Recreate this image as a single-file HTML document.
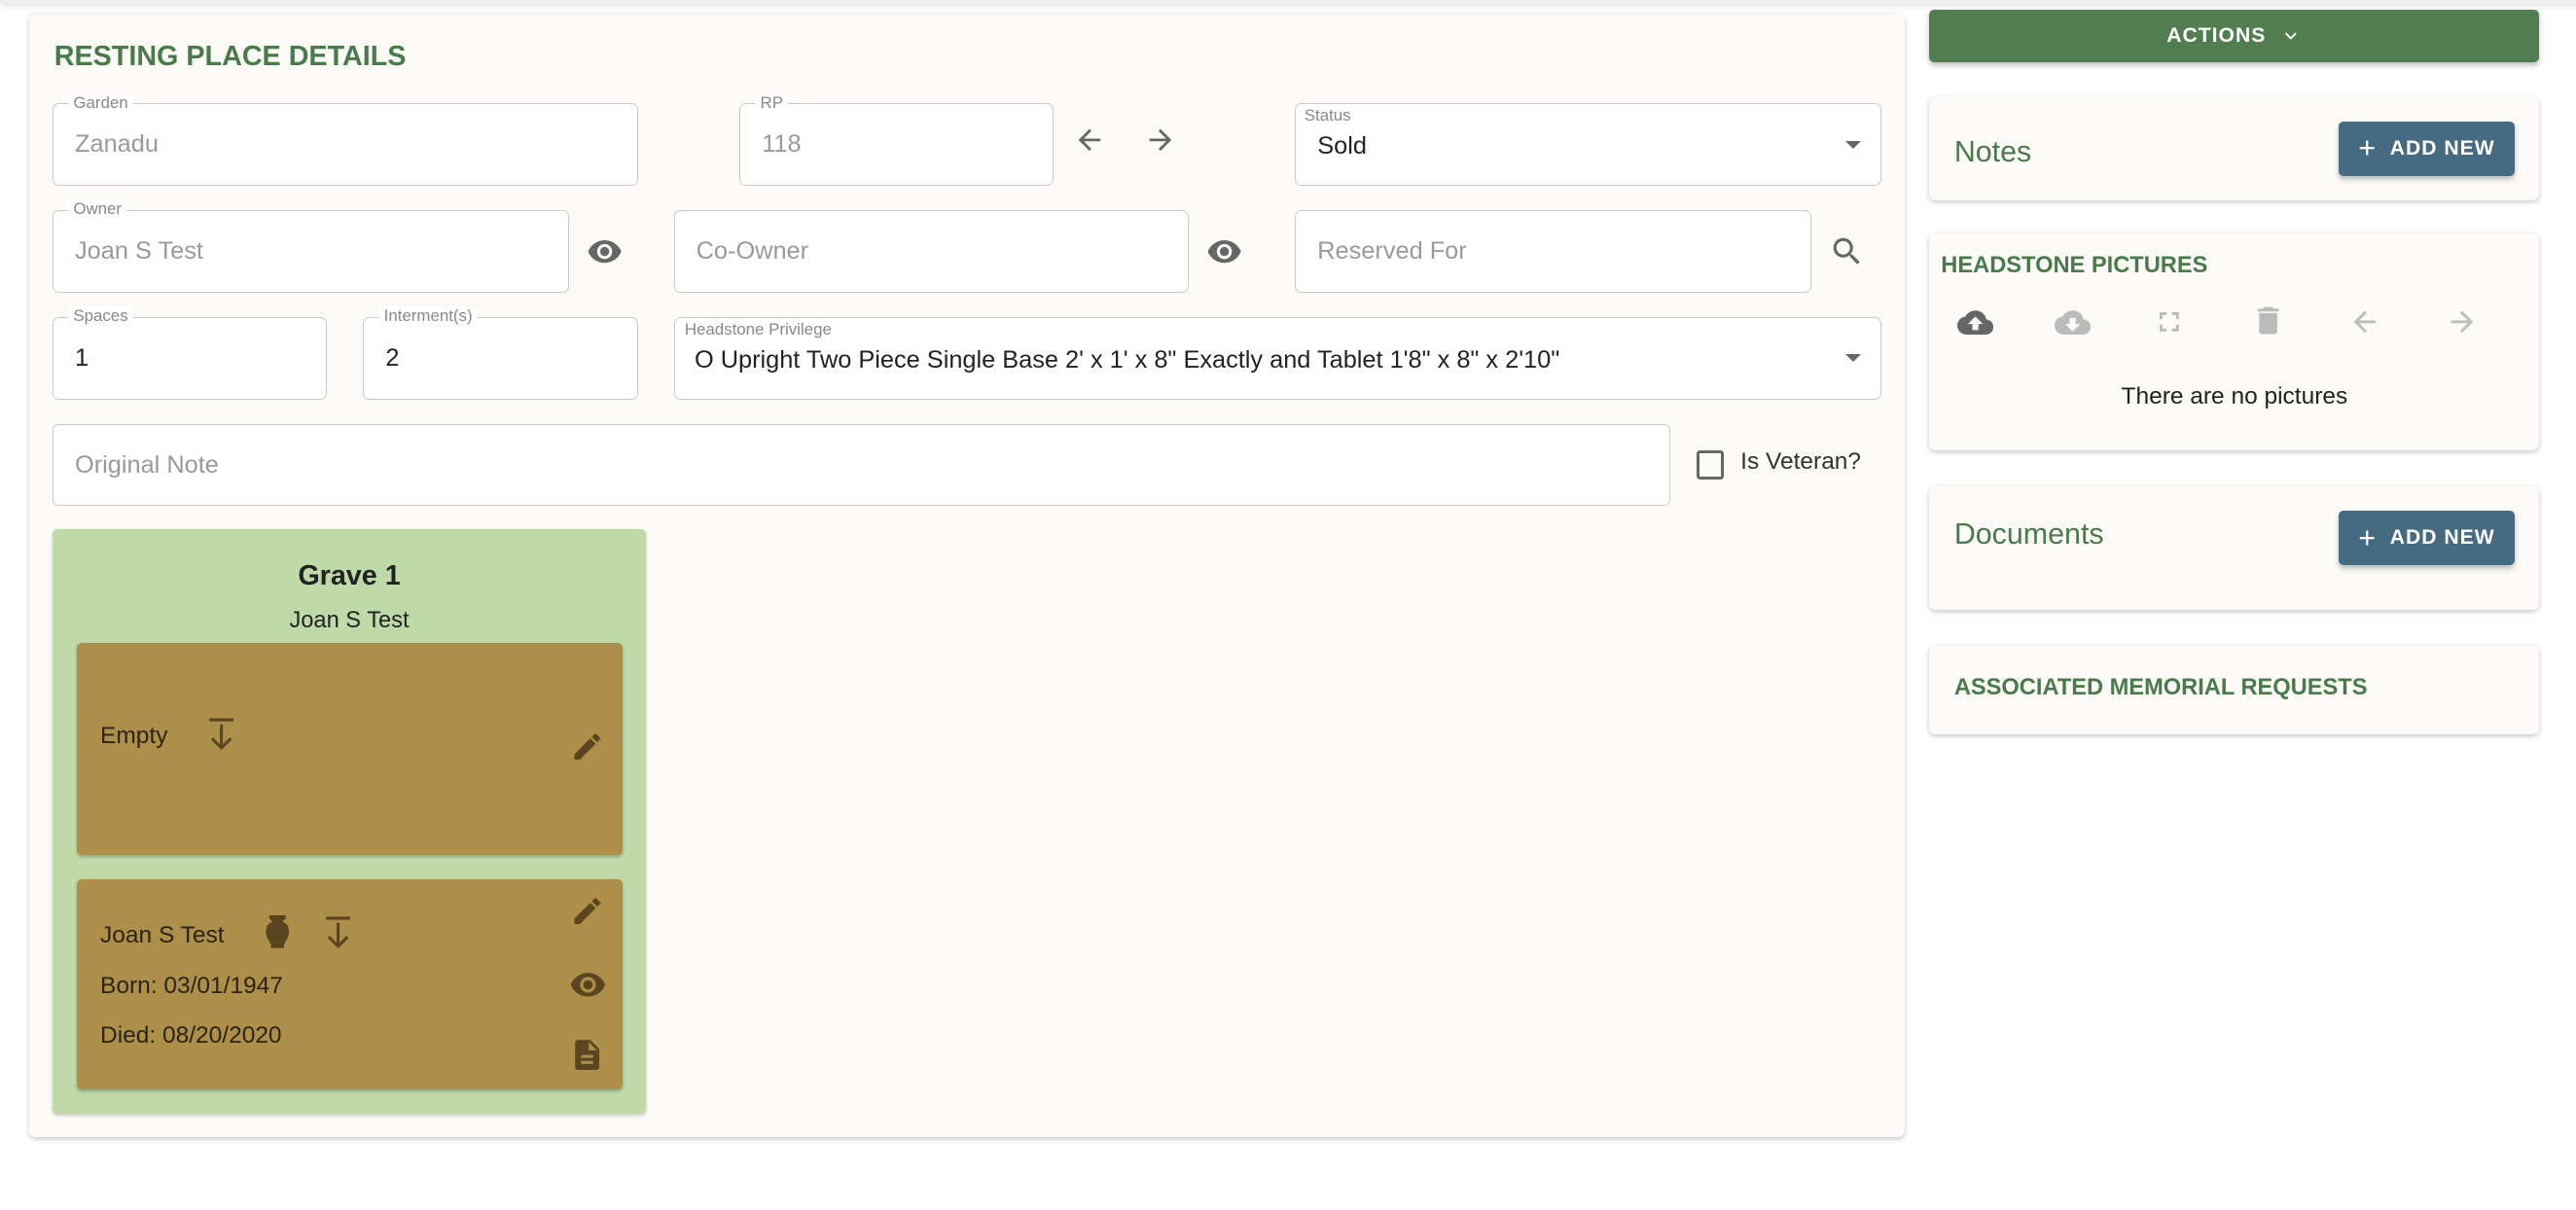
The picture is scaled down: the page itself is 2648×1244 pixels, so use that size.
<!DOCTYPE html>
<html><head><meta charset="utf-8"><style>
html,body{margin:0;padding:0;background:#fff;width:2648px;height:1244px;overflow:hidden}
#w{zoom:1.6895;width:1570px;height:740px;position:relative;font-family:"Liberation Sans",Arial,sans-serif;color:#222}
.a{position:absolute}
.card{position:absolute;background:#fbfaf6;border-radius:4px;box-shadow:0 1px 3px rgba(0,0,0,.22)}
.f{position:absolute;background:#fff;border:1px solid #c9c9c9;border-radius:4px;box-sizing:border-box;height:50px}
.f .l{position:absolute;top:-7px;left:9px;font-size:10px;color:#888;background:#fff;padding:0 3px;line-height:12px}
.f .v{position:absolute;left:13px;top:16px;font-size:15px;color:#999}
.f .v.d{color:#222}
.h{color:#4a7a4c;font-weight:bold}
svg{position:absolute}
.btn{position:absolute;background:#456a82;color:#fff;border-radius:3px;font-size:12.5px;font-weight:bold;letter-spacing:.6px;box-shadow:0 2px 3px rgba(0,0,0,.25);display:flex;align-items:center;justify-content:center}
.ic{fill:#666}
.br{fill:#5a4520}
</style></head><body><div id="w">
<div class="a" style="left:0;top:0;width:1570px;height:2px;box-shadow:0 1px 4px rgba(0,0,0,.25);background:#eee"></div>

<div class="card" style="left:18px;top:8px;width:1141px;height:684px"></div>
<div class="a h" style="left:33px;top:25px;font-size:17px">RESTING PLACE DETAILS</div>

<div class="f" style="left:32px;top:63px;width:356px"><span class="l">Garden</span><span class="v">Zanadu</span></div>
<div class="f" style="left:450px;top:63px;width:191px"><span class="l">RP</span><span class="v">118</span></div>
<svg style="left:653px;top:75px" width="20" height="20" viewBox="0 0 24 24"><path class="ic" d="M20 11H7.83l5.59-5.59L12 4l-8 8 8 8 1.410-1.41L7.83 13H20v-2z"/></svg>
<svg style="left:696px;top:75px" width="20" height="20" viewBox="0 0 24 24"><path class="ic" d="M12 4l-1.41 1.41L16.17 11H4v2h12.17l-5.58 5.59L12 20l8-8z"/></svg>
<div class="f" style="left:788px;top:63px;width:357px"><span class="l" style="top:1px;left:2px">Status</span><span class="v d" style="top:17px">Sold</span><span class="a" style="right:12px;top:22px;border:5px solid transparent;border-top:5px solid #666;border-bottom:0"></span></div>

<div class="f" style="left:32px;top:128px;width:314px"><span class="l">Owner</span><span class="v">Joan S Test</span></div>
<svg style="left:357px;top:142px" width="22" height="22" viewBox="0 0 24 24"><path class="ic" d="M12 4.5C7 4.5 2.73 7.61 1 12c1.73 4.39 6 7.5 11 7.5s9.27-3.11 11-7.5c-1.73-4.39-6-7.5-11-7.5zM12 17c-2.76 0-5-2.24-5-5s2.24-5 5-5 5 2.24 5 5-2.240 5-5 5zm0-8c-1.66 0-3 1.34-3 3s1.34 3 3 3 3-1.34 3-3-1.34-3-3-3z"/></svg>
<div class="f" style="left:410px;top:128px;width:313px"><span class="v">Co-Owner</span></div>
<svg style="left:734px;top:142px" width="22" height="22" viewBox="0 0 24 24"><path class="ic" d="M12 4.5C7 4.5 2.73 7.61 1 12c1.73 4.39 6 7.5 11 7.5s9.27-3.11 11-7.5c-1.73-4.39-6-7.5-11-7.5zM12 17c-2.76 0-5-2.24-5-5s2.24-5 5-5 5 2.24 5 5-2.240 5-5 5zm0-8c-1.66 0-3 1.34-3 3s1.34 3 3 3 3-1.34 3-3-1.34-3-3-3z"/></svg>
<div class="f" style="left:788px;top:128px;width:314px"><span class="v">Reserved For</span></div>
<svg style="left:1113px;top:142px" width="22" height="22" viewBox="0 0 24 24"><path class="ic" d="M15.5 14h-.79l-.28-.27A6.47 6.47 0 0016 9.5 6.5 6.5 0 109.5 16c1.61 0 3.09-.59 4.230-1.57l.27.28v.79l5 4.99L20.49 19l-4.99-5zm-6 0C7.01 14 5 11.99 5 9.5S7.01 5 9.5 5 14 7.01 14 9.5 11.99 14 9.5 14z"/></svg>

<div class="f" style="left:32px;top:193px;width:167px"><span class="l">Spaces</span><span class="v d">1</span></div>
<div class="f" style="left:221px;top:193px;width:167px"><span class="l">Interment(s)</span><span class="v d">2</span></div>
<div class="f" style="left:410px;top:193px;width:735px"><span class="l" style="top:1px;left:3px">Headstone Privilege</span><span class="v d" style="top:17px;left:12px">O Upright Two Piece Single Base 2' x 1' x 8" Exactly and Tablet 1'8" x 8" x 2'10"</span><span class="a" style="right:12px;top:22px;border:5px solid transparent;border-top:5px solid #666;border-bottom:0"></span></div>

<div class="f" style="left:32px;top:258px;width:984px"><span class="v">Original Note</span></div>
<div class="a" style="left:1032px;top:274px;width:13px;height:14px;border:2px solid #666;border-radius:2px"></div>
<div class="a" style="left:1059px;top:273px;font-size:14.5px;color:#333">Is Veteran?</div>

<div class="a" style="left:32px;top:322px;width:361px;height:356px;background:#bedaa9;border-radius:3px;box-shadow:0 1px 2px rgba(0,0,0,.2)"></div>
<div class="a" style="left:32px;top:341px;width:361px;text-align:center;font-size:17px;font-weight:bold;color:#222">Grave 1</div>
<div class="a" style="left:32px;top:370px;width:361px;text-align:center;font-size:14px;color:#222">Joan S Test</div>

<div class="a" style="left:47px;top:391px;width:332px;height:129px;background:#ae8f4a;border-radius:3px;box-shadow:0 1px 2px rgba(0,0,0,.25)"></div>
<div class="a" style="left:61px;top:440px;font-size:14.5px;color:#2a2410">Empty</div>
<svg style="left:124px;top:436px" width="22" height="22" viewBox="0 0 24 24"><path class="br" d="M4 1h16v2H4zM11 5h2v13.2l4.6-4.6 1.4 1.4-7 7-7-7 1.4-1.4 4.6 4.6z"/></svg>
<svg style="left:347px;top:444px" width="21" height="21" viewBox="0 0 24 24"><path class="br" d="M3 17.25V21h3.75L17.81 9.94l-3.75-3.75L3 17.25zM20.71 7.04a1 1 0 000-1.41l-2.34-2.340a1 1 0 00-1.41 0l-1.83 1.830 3.75 3.75 1.83-1.83z"/></svg>

<div class="a" style="left:47px;top:535px;width:332px;height:128px;background:#ae8f4a;border-radius:3px;box-shadow:0 1px 2px rgba(0,0,0,.25)"></div>
<div class="a" style="left:61px;top:561px;font-size:14.5px;color:#2a2410">Joan S Test</div>
<svg style="left:160px;top:557px" width="18" height="20" viewBox="0 0 18 20"><path class="br" d="M4 0h10v2l-2 2c3 1 4 3 4 6 0 4-3 7-3 8v2H5v-2c0-1-3-4-3-8 0-3 1-5 4-6L4 2z"/></svg>
<svg style="left:195px;top:557px" width="22" height="22" viewBox="0 0 24 24"><path class="br" d="M4 1h16v2H4zM11 5h2v13.2l4.6-4.6 1.4 1.4-7 7-7-7 1.4-1.4 4.6 4.6z"/></svg>
<div class="a" style="left:61px;top:592px;font-size:14.5px;color:#2a2410">Born: 03/01/1947</div>
<div class="a" style="left:61px;top:622px;font-size:14.5px;color:#2a2410">Died: 08/20/2020</div>
<svg style="left:347px;top:544px" width="21" height="21" viewBox="0 0 24 24"><path class="br" d="M3 17.25V21h3.75L17.81 9.94l-3.75-3.75L3 17.25zM20.71 7.04a1 1 0 000-1.41l-2.34-2.340a1 1 0 00-1.41 0l-1.83 1.830 3.75 3.75 1.83-1.83z"/></svg>
<svg style="left:346px;top:588px" width="23" height="23" viewBox="0 0 24 24"><path class="br" d="M12 4.5C7 4.5 2.73 7.61 1 12c1.73 4.39 6 7.5 11 7.5s9.27-3.11 11-7.5c-1.73-4.39-6-7.5-11-7.5zM12 17c-2.76 0-5-2.24-5-5s2.24-5 5-5 5 2.24 5 5-2.240 5-5 5zm0-8c-1.66 0-3 1.34-3 3s1.34 3 3 3 3-1.34 3-3-1.34-3-3-3z"/></svg>
<svg style="left:346px;top:631px" width="22" height="22" viewBox="0 0 24 24"><path class="br" d="M14 2H6c-1.1 0-2 .9-2 2v16c0 1.1.9 2 2 2h12c1.1 0 2-.9 2-2V8l-6-6zm2 16H8v-2h8v2zm0-4H8v-2h8v2zm-3-5V3.5L18.5 9H13z"/></svg>

<div class="btn" style="left:1174px;top:6px;width:371px;height:32px;background:#527d51;border-radius:3px">ACTIONS <svg style="position:relative;margin-left:8px" width="14" height="14" viewBox="0 0 24 24"><path d="M7.41 8.59L12 13.17l4.59-4.58L18 10l-6 6-6-6z" fill="#fff"/></svg></div>

<div class="card" style="left:1174px;top:59px;width:371px;height:63px"></div>
<div class="a" style="left:1189px;top:82px;font-size:18px;color:#4a7a4c">Notes</div>
<div class="btn" style="left:1423px;top:74px;width:107px;height:33px"><span style="font-size:18px;font-weight:normal;margin-right:8px">+</span>ADD NEW</div>

<div class="card" style="left:1174px;top:142px;width:371px;height:132px"></div>
<div class="a h" style="left:1181px;top:154px;font-size:14px">HEADSTONE PICTURES</div>
<svg style="left:1191px;top:185px" width="22" height="22" viewBox="0 0 24 24"><path fill="#666" d="M19.35 10.04A7.49 7.49 0 0012 4C9.11 4 6.6 5.64 5.35 8.04A5.994 5.994 0 000 14c0 3.31 2.69 6 6 6h13c2.76 0 5-2.24 5-5 0-2.64-2.05-4.78-4.65-4.96zM14 13v4h-4v-4H7l5-5 5 5h-3z"/></svg>
<svg style="left:1250px;top:185px" width="22" height="22" viewBox="0 0 24 24"><path fill="#bbb" d="M19.35 10.04A7.49 7.49 0 0012 4C9.11 4 6.6 5.64 5.35 8.04A5.994 5.994 0 000 14c0 3.31 2.69 6 6 6h13c2.76 0 5-2.24 5-5 0-2.64-2.05-4.78-4.65-4.96zM17 13l-5 5-5-5h3V9h4v4h3z"/></svg>
<svg style="left:1310px;top:186px" width="20" height="20" viewBox="0 0 24 24"><path fill="#bbb" d="M7 14H5v5h5v-2H7v-3zm-2-4h2V7h3V5H5v5zm12 7h-3v2h5v-5h-2v3zM14 5v2h3v3h2V5h-5z"/></svg>
<svg style="left:1369px;top:184px" width="22" height="22" viewBox="0 0 24 24"><path fill="#bbb" d="M6 19c0 1.1.9 2 2 2h8c1.1 0 2-.9 2-2V7H6v12zM19 4h-3.5l-1-1h-5l-1 1H5v2h14V4z"/></svg>
<svg style="left:1429px;top:186px" width="20" height="20" viewBox="0 0 24 24"><path fill="#bbb" d="M20 11H7.83l5.59-5.59L12 4l-8 8 8 8 1.410-1.41L7.83 13H20v-2z"/></svg>
<svg style="left:1488px;top:186px" width="20" height="20" viewBox="0 0 24 24"><path fill="#bbb" d="M12 4l-1.41 1.41L16.17 11H4v2h12.17l-5.58 5.59L12 20l8-8z"/></svg>
<div class="a" style="left:1174px;top:233px;width:371px;text-align:center;font-size:14.5px;color:#222">There are no pictures</div>

<div class="card" style="left:1174px;top:296px;width:371px;height:75px"></div>
<div class="a" style="left:1189px;top:315px;font-size:18px;color:#4a7a4c">Documents</div>
<div class="btn" style="left:1423px;top:311px;width:107px;height:33px"><span style="font-size:18px;font-weight:normal;margin-right:8px">+</span>ADD NEW</div>

<div class="card" style="left:1174px;top:393px;width:371px;height:54px"></div>
<div class="a h" style="left:1189px;top:411px;font-size:14px">ASSOCIATED MEMORIAL REQUESTS</div>
</div></body></html>
